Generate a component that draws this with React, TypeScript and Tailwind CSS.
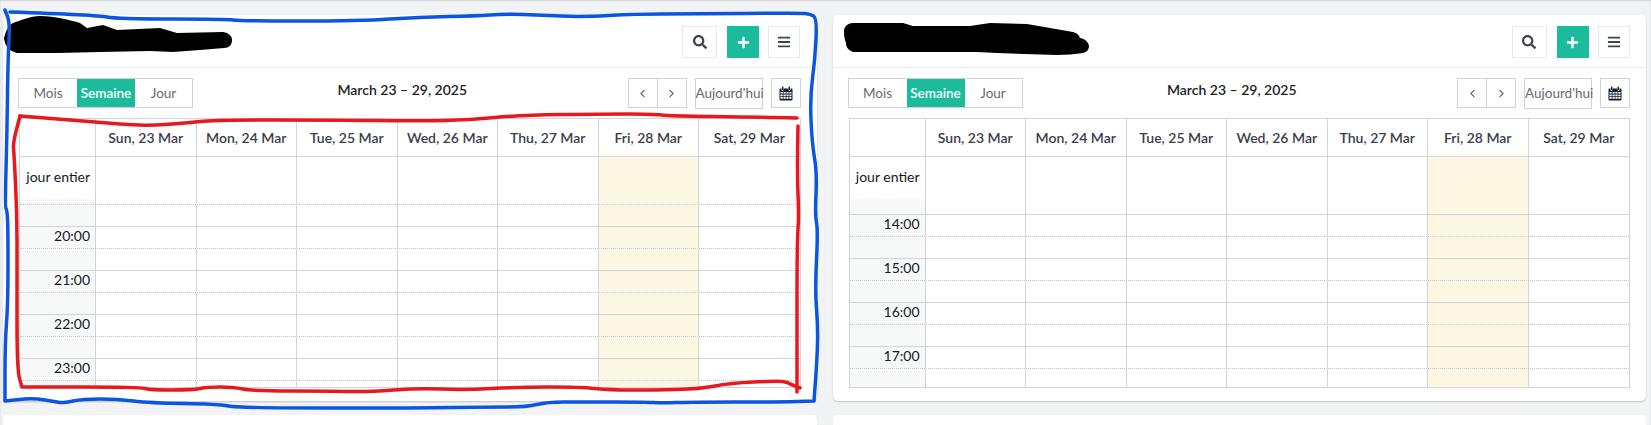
import { FaSearch, FaPlus, FaBars } from "react-icons/fa";
import { LuChevronLeft, LuChevronRight } from "react-icons/lu";

const DAYS = ["Sun, 23 Mar", "Mon, 24 Mar", "Tue, 25 Mar", "Wed, 26 Mar", "Thu, 27 Mar", "Fri, 28 Mar", "Sat, 29 Mar"];
const GRID = "grid grid-cols-[76px_repeat(7,minmax(0,1fr))]";

type SlotData = { label?: string; hour?: boolean; height: number; first?: boolean };

function smooth(p: number[][]) {
  let d = `M${p[0][0]} ${p[0][1]}`;
  for (let i = 1; i < p.length - 1; i++) {
    const mx = (p[i][0] + p[i + 1][0]) / 2;
    const my = (p[i][1] + p[i + 1][1]) / 2;
    d += `Q${p[i][0]} ${p[i][1]} ${mx} ${my}`;
  }
  const l = p[p.length - 1];
  return d + `L${l[0]} ${l[1]}`;
}

const BLUE = [[10,12],[97,15],[117,19],[227,19],[240,21],[360,21],[420,17],[477,16],[503,14],[543,15],[580,17],[637,14],[687,14],[800,13],[810,14],[817,18],[815,60],[810,97],[812,143],[817,173],[815,215],[818,230],[815,290],[818,327],[817,360],[814,401],[814,401],[780,402],[693,402],[660,403],[647,402],[580,402],[547,402],[527,407],[487,407],[420,408],[240,408],[217,404],[150,403],[117,399],[83,399],[63,403],[57,402],[33,398],[5,401],[5,401],[5,343],[8,303],[8,227],[7,210],[5,207],[7,133],[8,57],[10,23],[5,10]];
const RED_TOP = [[20,116],[97,122],[143,126],[187,123],[213,120],[333,120],[420,121],[470,120],[520,115],[603,114],[653,114],[670,116],[753,117],[797,118]];
const RED_RIGHT = [[798,126],[797,173],[799,215],[797,243],[797,363],[797,392]];
const RED_REST = [[800,388],[792,385],[787,382],[777,381],[730,383],[700,389],[653,390],[610,390],[580,387],[520,387],[463,390],[420,388],[367,392],[333,391],[253,391],[233,387],[207,387],[193,390],[150,390],[140,387],[22,387],[22,387],[17,370],[17,270],[17,213],[14,153],[13,143],[20,116]];

function CalendarIcon() {
  return (
    <svg width="14" height="15" viewBox="0 0 14 15" fill="#16202c">
      <path d="M0.5 3.5 a1 1 0 0 1 1-1 h1 v1.4 a1 1 0 0 0 2 0 V2.5 h5 v1.4 a1 1 0 0 0 2 0 V2.5 h1 a1 1 0 0 1 1 1 V13.5 a1 1 0 0 1-1 1 h-11 a1 1 0 0 1-1-1z M1.5 6 v1.6 h2.2 V6z M4.5 6 v1.6 h2.2 V6z M7.4 6 v1.6 h2.2 V6z M10.3 6 v1.6 h2.2 V6z M1.5 8.4 v1.6 h2.2 V8.4z M4.5 8.4 v1.6 h2.2 V8.4z M7.4 8.4 v1.6 h2.2 V8.4z M10.3 8.4 v1.6 h2.2 V8.4z M1.5 10.8 v2 h2.2 v-2z M4.5 10.8 v2 h2.2 v-2z M7.4 10.8 v2 h2.2 v-2z M10.3 10.8 v2 h2.2 v-2z" fillRule="evenodd" />
      <rect x="3" y="0.5" width="1.4" height="3.6" rx="0.7" />
      <rect x="9.6" y="0.5" width="1.4" height="3.6" rx="0.7" />
    </svg>
  );
}

function Slot({ label, hour, height, first }: SlotData) {
  const line = first ? "" : hour ? "border-t border-[#d3d3d8]" : "border-t border-dotted border-[#c4c4c8]";
  return (
    <div className={`${GRID} ${line}`} style={{ height }}>
      <div className="bg-[#f7f9f8] border-r border-[#d3d3d8] pr-[5px] text-right text-[14px] leading-[17px] text-[#111827]">{label}</div>
      {DAYS.map((d, i) => (
        <div key={d} className={`${i === 5 ? "bg-[#fcf7e3]" : ""} ${i < 6 ? "border-r border-[#d3d3d8]" : ""}`} />
      ))}
    </div>
  );
}

function WeekGrid({ slots }: { slots: SlotData[] }) {
  return (
    <div className="border border-[#d3d3d8]">
      <div className={`${GRID} h-[38px] border-b border-[#d3d3d8]`}>
        <div className="border-r border-[#d3d3d8]" />
        {DAYS.map((d, i) => (
          <div key={d} className={`flex items-center justify-center text-[14px] font-semibold text-[#3a3d4a] ${i < 6 ? "border-r border-[#d3d3d8]" : ""}`}>
            {d}
          </div>
        ))}
      </div>
      <div className={`${GRID} h-[42px]`}>
        <div className="border-r border-[#d3d3d8] pr-[5px] pt-[9px] text-right text-[14px] leading-[21px] text-[#111827] whitespace-nowrap">jour entier</div>
        {DAYS.map((d, i) => (
          <div key={d} className={`${i === 5 ? "bg-[#fcf7e3]" : ""} ${i < 6 ? "border-r border-[#d3d3d8]" : ""}`} />
        ))}
      </div>
      <div className="h-[188px] overflow-hidden">
        {slots.map((s, i) => (
          <Slot key={i} {...s} />
        ))}
      </div>
    </div>
  );
}

function Card({ slots }: { slots: SlotData[] }) {
  return (
    <section className="h-[386px] rounded-[5px] bg-white shadow-[0_1px_2px_rgba(0,0,0,0.2)]">
      <header className="flex h-[53px] items-center justify-end gap-[10px] border-b border-[#e9ecef] pl-[16px] pr-[16.5px] pt-[2px] text-[#3f4450]">
        <button className="flex h-[32px] w-[35px] items-center justify-center border border-[#e7eaec] bg-white text-[14px]"><FaSearch /></button>
        <button className="flex h-[32px] w-[32px] items-center justify-center bg-[#1abc9c] text-[13px] text-white"><FaPlus /></button>
        <button className="-ml-[1px] flex h-[32px] w-[32px] items-center justify-center border border-[#e7eaec] bg-white text-[14px]"><FaBars /></button>
      </header>
      <div className="flex h-[50px] items-start pl-[15px] pr-[16px] pt-[10px]">
        <div className="flex h-[30px] w-[175px] border border-[#d2d2d6] text-[13.5px] text-[#676a6c]">
          <button className="w-[58px]">Mois</button>
          <button className="w-[58px] bg-[#1abc9c] font-semibold text-white">Semaine</button>
          <button className="flex-1">Jour</button>
        </div>
        <div className="flex-1 pr-[16px] pt-[2px] text-center text-[14px] font-semibold leading-[20px] text-[#222]">March 23 – 29, 2025</div>
        <div className="flex h-[30px] w-[59px] border border-[#d2d2d6] text-[#676a6c]">
          <button className="flex flex-1 items-center justify-center border-r border-[#d2d2d6]"><LuChevronLeft size={13} /></button>
          <button className="flex flex-1 items-center justify-center"><LuChevronRight size={13} /></button>
        </div>
        <button className="ml-[8px] h-[31px] w-[68px] border border-[#d2d2d6] text-center text-[13.5px] text-[#676a6c] whitespace-nowrap">Aujourd'hui</button>
        <button className="ml-[8px] flex h-[30px] w-[30px] items-center justify-center border border-[#d2d2d6]"><CalendarIcon /></button>
      </div>
      <div className="px-[16px]">
        <WeekGrid slots={slots} />
      </div>
    </section>
  );
}

const LEFT: SlotData[] = [
  { height: 5, first: true },
  { height: 22 },
  { height: 22, hour: true, label: "20:00" },
  { height: 22 },
  { height: 22, hour: true, label: "21:00" },
  { height: 22 },
  { height: 22, hour: true, label: "22:00" },
  { height: 22 },
  { height: 22, hour: true, label: "23:00" },
  { height: 22 },
];
const RIGHT: SlotData[] = [
  { height: 15, first: true },
  { height: 22, hour: true, label: "14:00" },
  { height: 22 },
  { height: 22, hour: true, label: "15:00" },
  { height: 22 },
  { height: 22, hour: true, label: "16:00" },
  { height: 22 },
  { height: 22, hour: true, label: "17:00" },
  { height: 22 },
];

export default function App() {
  return (
    <div className="relative h-[425px] overflow-hidden bg-[#f2f3f5] font-['Lato',sans-serif] shadow-[inset_0_1px_2px_rgba(0,0,0,0.15)]">
      <div className="grid grid-cols-2 gap-x-[16px] gap-y-[14px] pl-[3px] pr-[5px] pt-[15px]">
        <Card slots={LEFT} />
        <Card slots={RIGHT} />
        <section className="h-[60px] rounded-[5px] bg-white" />
        <section className="h-[60px] rounded-[5px] bg-white" />
      </div>
      <svg className="pointer-events-none absolute inset-0" width="1651" height="425" fill="none" strokeLinejoin="round" strokeLinecap="round">
        <path fill="#000" d="M4 38C6 30 9 25 13 23C22 20 30 16 40 16C55 16 70 20 80 23L87 28L103 25L117 30L160 28L177 33L223 32C229 33 232 36 232 40C232 45 229 48 224 48L200 50L173 52L150 51L100 52L57 53L17 53C9 51 5 46 4 38Z" />
        <path fill="#000" d="M844 30C845 26 848 23 853 23L903 23L913 26L970 26L990 23L1027 24L1073 32C1077 33 1079 35 1080 38C1086 39 1089 43 1089 47C1088 51 1086 52 1083 53C1075 54 1066 55 1057 55L997 53L977 52L913 52L853 52C848 50 846 47 846 43C844 38 844 34 844 30Z" />
        <path stroke="#0b55e0" strokeWidth="3.5" d={smooth(BLUE)} />
        <path stroke="#e8181c" strokeWidth="3.5" d={smooth(RED_TOP)} />
        <path stroke="#e8181c" strokeWidth="3.5" d={smooth(RED_RIGHT)} />
        <path stroke="#e8181c" strokeWidth="3.5" d={smooth(RED_REST)} />
      </svg>
    </div>
  );
}
